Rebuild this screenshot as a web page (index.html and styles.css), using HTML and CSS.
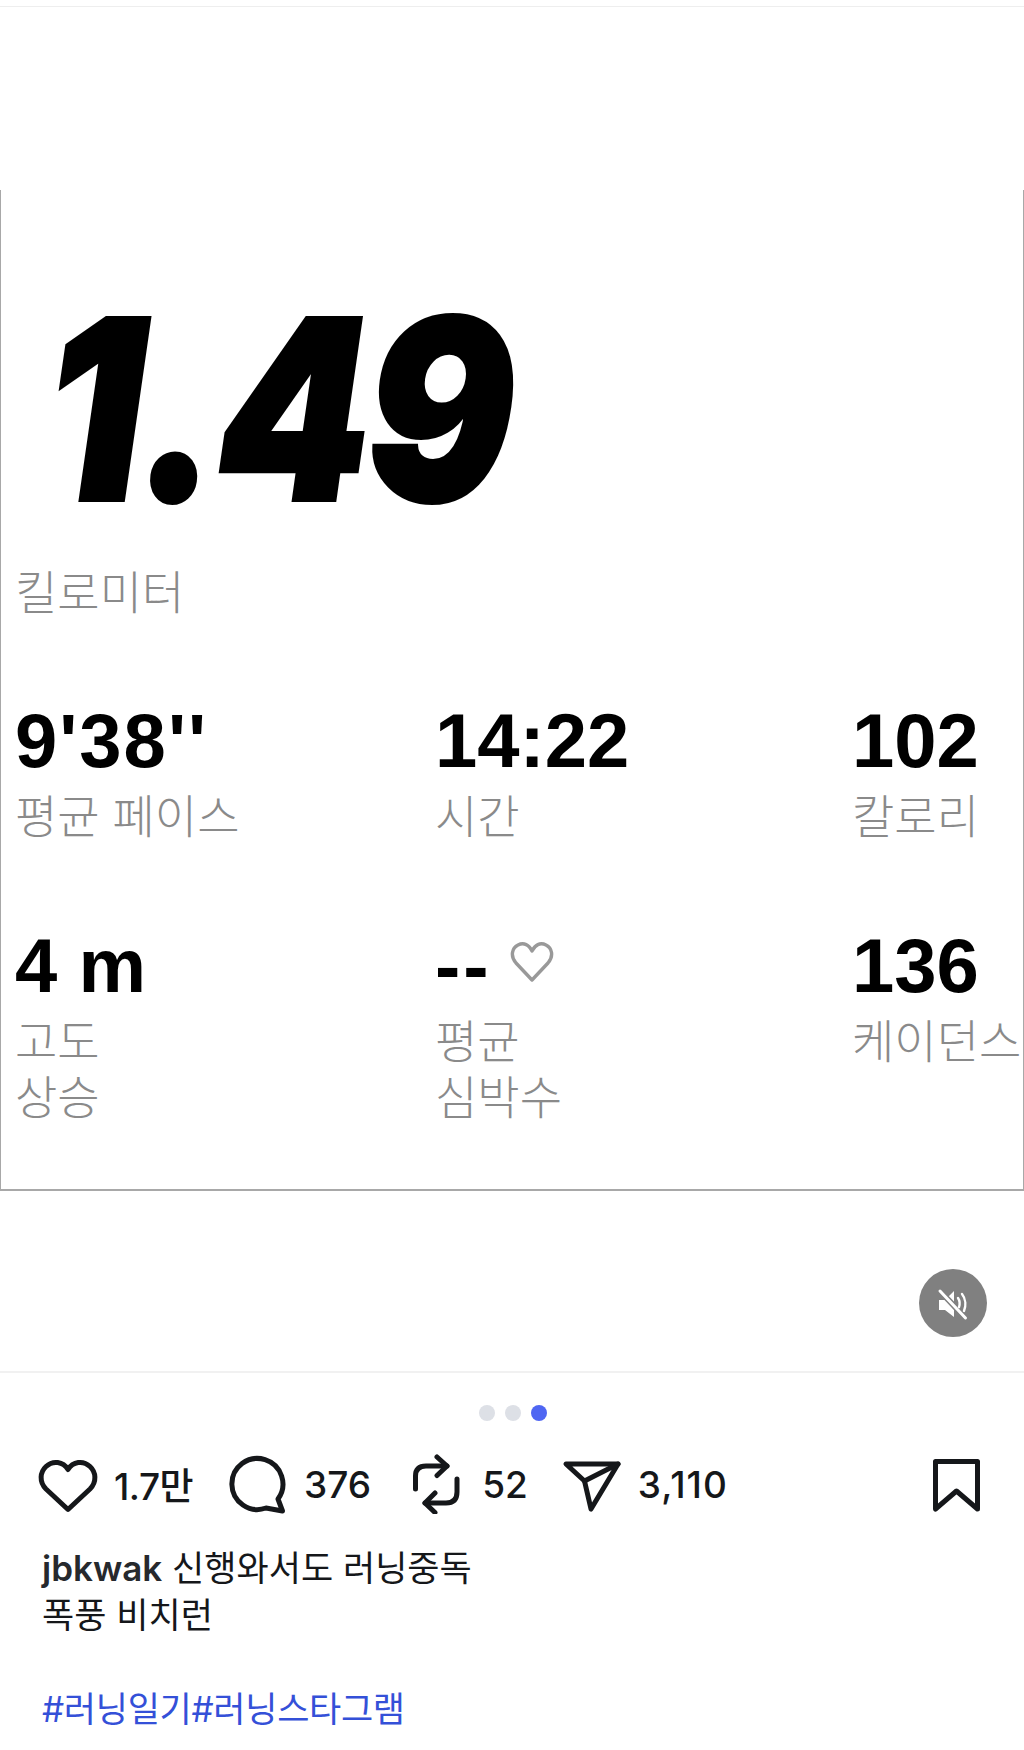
FILE: index.html
```html
<!DOCTYPE html>
<html lang="ko">
<head>
  <meta charset="UTF-8" />
  <title>jbkwak</title>
  <link rel="stylesheet" href="styles.css">
</head>
<body>

  <div class="top-line"></div>

  <div class="media">
    <div class="run-card">
      <div class="distance">1.49</div>
      <div class="distance-label">킬로미터</div>

      <div class="stats">
        <div class="stat">
          <div class="stat-value pace">9'38''</div>
          <div class="stat-label">평균 페이스</div>
        </div>
        <div class="stat">
          <div class="stat-value">14:22</div>
          <div class="stat-label">시간</div>
        </div>
        <div class="stat">
          <div class="stat-value">102</div>
          <div class="stat-label">칼로리</div>
        </div>
        <div class="stat">
          <div class="stat-value">4 m</div>
          <div class="stat-label">고도<br>상승</div>
        </div>
        <div class="stat">
          <div class="stat-value">
            <span class="no-data">--</span>
            <svg class="hr-heart" viewBox="0 0 44 42" fill="none" stroke="#999" stroke-width="3.4" stroke-linejoin="round">
              <path d="M22 39 L6 22 C0 15 2 7 8 4 C14 1 19 4 22 10 C25 4 30 1 36 4 C42 7 44 15 38 22 Z"/>
            </svg>
          </div>
          <div class="stat-label">평균<br>심박수</div>
        </div>
        <div class="stat">
          <div class="stat-value">136</div>
          <div class="stat-label">케이던스</div>
        </div>
      </div>
    </div>

    <div class="mute-row">
      <div class="mute-btn">
        <svg viewBox="0 0 68 68" width="68" height="68" fill="none" stroke-linecap="round">
          <path d="M20 31 H26 L35 22 V48 L26 41 H20 Z" fill="#fff"/>
          <path d="M21 22 L46.5 49" stroke="#808080" stroke-width="6"/>
          <path d="M21 22 L46.5 49" stroke="#fff" stroke-width="3"/>
          <path d="M39 29 C41 32 41 35 40 38" stroke="#fff" stroke-width="2.4"/>
          <path d="M43 25 C47 30 47 37 45 42" stroke="#fff" stroke-width="2.4"/>
        </svg>
      </div>
    </div>
  </div>

  <div class="dots">
    <span class="dot"></span>
    <span class="dot"></span>
    <span class="dot active"></span>
  </div>

  <div class="actions">
    <div class="action">
      <svg class="icon" viewBox="0 0 60 60">
        <path d="M30 55.5 L8 35 C1 28 2 18 8 12.5 C15 6 25 7.5 30 15.5 C35 7.5 45 6 52 12.5 C58 18 59 28 52 35 Z"/>
      </svg>
      <span class="count-likes">1.7만</span>
    </div>
    <div class="action">
      <svg class="icon" viewBox="0 0 60 60">
        <path d="M38 54 L54.5 57 L50 45 A25.5 25.5 0 1 0 38 54 Z"/>
      </svg>
      <span>376</span>
    </div>
    <div class="action">
      <svg class="icon" viewBox="0 0 60 60">
        <path d="M9.5 35 V22 Q9.5 12 20 12 H41"/>
        <path d="M31 3 L41 12 L31 21.5"/>
        <path d="M51 25 V38 Q51 49 40 49 H19"/>
        <path d="M29 39 L19 49 L29 58.5"/>
      </svg>
      <span>52</span>
    </div>
    <div class="action send">
      <svg class="icon" viewBox="0 0 60 60">
        <path d="M4 10 H56 L29 55 L22.5 27 Z"/>
        <path d="M22.5 27 L56 10"/>
      </svg>
      <span class="count-shares">3,110</span>
    </div>
    <svg class="icon bookmark" viewBox="0 0 60 60">
      <path d="M9.5 7.5 H51.5 V55 L30.5 37 L9.5 55 Z"/>
    </svg>
  </div>

  <div class="caption">
    <p><b>jbkwak</b> 신행와서도 러닝중독</p>
    <p>폭풍 비치런</p>
    <p class="tags">#러닝일기#러닝스타그램</p>
  </div>

</body>
</html>
```

FILE: styles.css
```css
* {
  box-sizing: border-box;
  margin: 0;
  padding: 0;
}

body {
  font-family: 'Inter', 'Noto Sans CJK KR', sans-serif;
  background: white;
  color: #15171a;
  overflow: hidden;
}

.top-line {
  height: 7px;
  border-bottom: 1px solid #eeeeee;
}

/* Video area */
.media {
  height: 1366px;
  padding-top: 183px;
  border-bottom: 2px solid #f1f1f1;
}

.run-card {
  height: 1001px;
  padding: 105px 0 0 14px;
  border: solid #a8a8a8;
  border-width: 0 1px 2px 1px;
  font-family: 'Liberation Sans', 'Noto Sans CJK KR', sans-serif;
}

.distance {
  height: 240px;
  margin-left: 30px;
  font-family: 'Inter', sans-serif;
  font-size: 250px;
  font-weight: 900;
  font-style: italic;
  line-height: 228px;
  letter-spacing: -4px;
  color: black;
  -webkit-text-stroke: 4px black;
  transform: scaleX(0.87);
  transform-origin: left;
}

.distance-label,
.stat-label {
  font-family: 'Noto Sans CJK KR', sans-serif;
  font-size: 46px;
  font-weight: 300;
  line-height: 56px;
  color: #8a8a8a;
}

.distance-label {
  margin-top: 26px;
}

.stats {
  display: grid;
  grid-template-columns: 420px 417px auto;
  grid-auto-rows: 225px;
  margin-top: 89px;
}

.stat-value {
  display: flex;
  align-items: center;
  gap: 18px;
  height: 70px;
  font-size: 76px;
  font-weight: bold;
  line-height: 70px;
  color: black;
}

.pace {
  letter-spacing: 2px;
}

.no-data {
  letter-spacing: 3px;
}

.stat-label {
  margin-top: 9px;
  white-space: nowrap;
}

.hr-heart {
  width: 44px;
  height: 42px;
  margin-top: -8px;
}

.mute-row {
  display: flex;
  justify-content: flex-end;
  padding: 78px 37px 0 0;
}

.mute-btn {
  width: 68px;
  height: 68px;
  border-radius: 50%;
  background: #808080;
}

/* Carousel dots */
.dots {
  display: flex;
  justify-content: center;
  gap: 10px;
  margin-top: 32px;
  padding-left: 1px;
}

.dot {
  width: 16px;
  height: 16px;
  border-radius: 50%;
  background: #dde0e6;
}

.dot.active {
  background: #4f66f2;
}

/* Actions */
.actions {
  display: flex;
  align-items: center;
  gap: 35px;
  height: 60px;
  margin-top: 33px;
  padding: 0 38px;
  font-size: 37px;
  font-weight: 500;
}

.action {
  display: flex;
  align-items: center;
  gap: 16px;
}

.count-likes {
  letter-spacing: -0.5px;
}

.count-shares {
  letter-spacing: 1px;
}

.send {
  margin-left: -1px;
}

.icon {
  width: 60px;
  height: 60px;
  fill: none;
  stroke: #15171a;
  stroke-width: 5;
  stroke-linecap: round;
  stroke-linejoin: round;
}

.bookmark {
  margin-left: auto;
}

/* Caption */
.caption {
  margin-top: 31px;
  padding-left: 42px;
  font-size: 35px;
  line-height: 47px;
}

.caption b {
  font-weight: 600;
  color: #26292d;
}

.tags {
  margin-top: 47px;
  letter-spacing: -0.3px;
  color: #3450d8;
}
```
